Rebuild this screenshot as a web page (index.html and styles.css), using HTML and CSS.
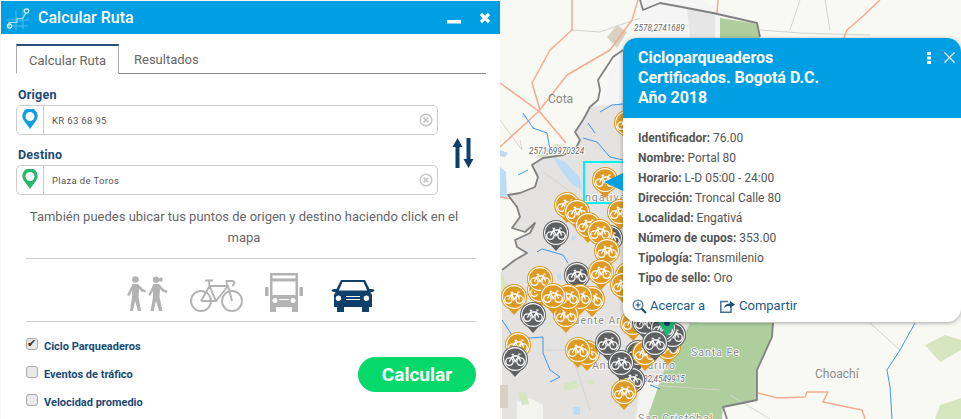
FILE: index.html
```html
<!DOCTYPE html>
<html lang="es">
<head>
    <meta charset="UTF-8">
    <meta name="viewport" content="width=device-width, initial-scale=1.0">
    <title>Calcular Ruta</title>
    <link rel="stylesheet" href="styles.css">
</head>
<body>
<div class="map">
    <svg class="map-bg" width="961" height="419" viewBox="0 0 961 419">
        <defs>
            <g id="bike-w" fill="none" stroke="#fff" stroke-width="1.3">
                <circle cx="-5.6" cy="2.6" r="3.7"/>
                <circle cx="5.6" cy="2.6" r="3.7"/>
                <path d="M-5.6 2.6L-2.4-3H3.6L5.6 2.6M-2.4-3L0 2.6L3.6-3M-3.4-4.6H-.8M3.2-4.8H5.6"/>
            </g>
            <g id="pin-o">
                <path d="M-12.6 4L0 18L12.6 4Z" fill="#de9a22"/>
                <circle r="13" fill="#de9a22"/>
                <circle r="11.4" fill="#de9a22" stroke="#fff" stroke-width="1.1"/>
                <use href="#bike-w"/>
            </g>
            <g id="pin-g">
                <path d="M-12.6 4L0 18L12.6 4Z" fill="#5f6062"/>
                <circle r="13" fill="#5f6062"/>
                <circle r="11.4" fill="#5f6062" stroke="#fff" stroke-width="1.1"/>
                <use href="#bike-w"/>
            </g>
        </defs>

        <!-- zonas -->
        <rect width="961" height="419" fill="#f9f9f4"/>
        <path class="zone-light" d="M640 0H700L760 25L760 100L775 323L690 340L600 110L613 57L640 40Z"/>
        <path class="zone-gray" d="M687 8L715 14V38H690Z"/>
        <path class="zone-urban" d="M590 107L650 100L700 320L680 345L673 350L663 373L657 390L647 419H502V270L515 260L527 253L517 247L515 240L530 233L535 223L525 232L512 228L520 217L517 207L508 195L520 193L535 187L538 177L532 165L543 158L563 155L575 150L580 140L575 132L583 120Z"/>
        <path class="zone-white" d="M517 402L530 398L543 405V419H517ZM640 385L660 380L655 400L645 419H636Z"/>
        <path class="zone-green" d="M690 323H773L772 337L757 370L757 400L723 407L722 419H647L657 390L663 373L673 350L680 343Z"/>
        <path class="zone-green" d="M720 18L758 24L760 40H720Z"/>
        <path class="zone-tan" d="M607 37L617 25L627 32L617 48Z"/>
        <path class="zone-tan" d="M500 385H508V408H500Z"/>
        <path class="zone-soft" d="M563 384L577 380L577 388L565 391ZM518 393L526 392L529 404L522 405ZM587 381L593 380L594 384L588 384ZM925 345L945 335L961 340V350L940 362ZM940 405L961 398V419H935Z"/>
        <path class="zone-soft" d="M535 157L543 153L556 144L563 145L553 154L543 158Z"/>
        <path class="zone-soft" d="M501 270L506 285L506 297H501Z"/>
        <path class="zone-lake" d="M553 157L565 162L580 178L582 190L572 184L562 172ZM500 167L506 172L507 198H500ZM500 150L508 153L505 157L500 156ZM541 153L548 148L552 150L546 156ZM556 275L561 273L561 281ZM570 239L577 234L574 241ZM573 407H580V415H574ZM523 112L526 118L522 117Z"/>

        <!-- vias y rios -->
        <g class="road-thin">
            <path d="M572 30L600 32L640 18M500 120L522 150L520 140M760 30L800 33L870 35M800 0L790 30M825 0L830 30"/>
            <path d="M870 323L900 350M545 350L568 350L577 370L590 410M568 350L640 345M730 395L770 419M650 385L720 390"/>
            <path d="M543 172L575 195"/>
        </g>
        <g class="road">
            <path d="M572 0V30L550 50L532 83L540 110"/>
            <path d="M638 0L632 20L610 50L567 75L538 112L500 147"/>
            <path d="M500 83L540 112L566 143"/>
            <path d="M718 0L717 13"/>
            <path d="M880 0L862 17L847 30L843 40"/>
            <path d="M758 393L777 398L805 397L807 392L828 392L823 402L847 407L862 410L865 419"/>
            <path d="M500 197L512 199"/>
        </g>
        <g class="river">
            <path d="M583 138L597 142L610 157L623 160M600 112L612 105L623 104M588 123L595 133"/>
            <path d="M523 113L533 128L547 133L550 150"/>
            <path d="M537 252L542 249L553 252L563 255L568 263"/>
            <path d="M502 320L512 335L530 338L543 337L543 353L550 370L560 377L550 382"/>
            <path d="M915 323L900 350L887 370L890 387L892 419"/>
            <path d="M518 175L528 170"/>
            <path d="M650 385L660 389"/>
        </g>

        <!-- limite de la ciudad -->
        <path class="border" d="M640 0L643 10L660 3L687 8L713 13L757 23L760 37"/>
        <path class="border" d="M623 50L613 57L598 80L600 90L598 100L590 107L583 120L575 132L580 140L575 150L563 155L543 158L532 165L538 177L535 187L520 193L508 195L517 207L520 217L512 228L525 232L535 223L530 233L515 240L517 247L527 253L515 260L502 270"/>
        <path class="border" d="M773 323L772 337L757 370L757 400L723 407L727 419"/>

        <!-- nombres -->
        <text class="place" x="548" y="103">Cota</text>
        <text class="place" x="815" y="378">Choachí</text>
        <text class="place halo" x="691" y="356">Santa Fe</text>
        <text class="place halo" x="638" y="422">San Cristóbal</text>
        <text class="place halo" x="566" y="324">Puente Aranda</text>
        <text class="place halo" x="592" y="369">Antonio Nariño</text>
        <text class="coord" x="634" y="31">2578,2741689</text>
        <text class="coord" x="529" y="154">2571,69970324</text>
        <text class="coord" x="643" y="382">82,4549915</text>

        <!-- seleccion -->
        <text class="place halo" x="585" y="201">ngativá</text>
        <rect x="584" y="162" width="40" height="41" fill="none" stroke="#00f2f7" stroke-width="2"/>

        <!-- cicloparqueaderos -->
        <use href="#pin-o" x="627" y="123"/>
        <use href="#pin-o" x="605" y="180"/>
        <use href="#pin-o" x="567" y="205"/>
        <use href="#pin-o" x="577" y="212"/>
        <use href="#pin-o" x="620" y="212"/>
        <use href="#pin-g" x="556" y="233"/>
        <use href="#pin-o" x="588" y="225"/>
        <use href="#pin-g" x="610" y="238"/>
        <use href="#pin-o" x="600" y="232"/>
        <use href="#pin-o" x="607" y="251"/>
        <use href="#pin-o" x="628" y="275"/>
        <use href="#pin-o" x="623" y="285"/>
        <use href="#pin-g" x="577" y="275"/>
        <use href="#pin-o" x="601" y="272"/>
        <use href="#pin-o" x="540" y="290"/>
        <use href="#pin-o" x="540" y="279"/>
        <use href="#pin-o" x="514" y="297"/>
        <use href="#pin-o" x="592" y="299"/>
        <use href="#pin-o" x="580" y="297"/>
        <use href="#pin-o" x="566" y="315"/>
        <use href="#pin-o" x="568" y="297"/>
        <use href="#pin-o" x="553" y="296"/>
        <use href="#pin-g" x="533" y="315"/>
        <use href="#pin-o" x="518" y="345"/>
        <use href="#pin-g" x="515" y="359"/>
        <use href="#pin-o" x="587" y="353"/>
        <use href="#pin-o" x="578" y="350"/>
        <use href="#pin-g" x="608" y="343"/>
        <use href="#pin-o" x="633" y="323"/>
        <use href="#pin-g" x="645" y="322"/>
        <use href="#pin-o" x="668" y="347"/>
        <use href="#pin-g" x="638" y="353"/>
        <use href="#pin-o" x="645" y="353"/>
        <use href="#pin-g" x="632" y="380"/>
        <use href="#pin-g" x="621" y="363"/>
        <use href="#pin-g" x="673" y="335"/>
        <use href="#pin-g" x="663" y="328"/>
        <use href="#pin-g" x="655" y="343"/>
        <use href="#pin-o" x="624" y="392"/>
        <path d="M658 322H676L667 337Z" fill="#22b573"/>
        <circle cx="667" cy="323" r="3" fill="#123f6d"/>
    </svg>

    <section class="panel">
        <header class="panel-head">
            <svg class="logo" width="24" height="24" viewBox="0 0 24 24" fill="none">
                <path d="M1 14H23M1 20H22M10 4V24M17 3V23" stroke="#4fbcec" stroke-width="1"/>
                <path d="M3 21V16.5H11V12.5H16.5L20 7" stroke="#a9e0f7" stroke-width="1.2"/>
                <circle cx="3.5" cy="20" r="2.2" stroke="#e4f6fd" stroke-width="1.2"/>
                <circle cx="20.5" cy="5" r="2.2" stroke="#e4f6fd" stroke-width="1.2"/>
            </svg>
            <h1>Calcular Ruta</h1>
            <div class="win-btns">
                <svg width="14" height="14" viewBox="0 0 14 14"><rect y="9" width="14" height="3.5" fill="#fff"/></svg>
                <svg width="12" height="12" viewBox="0 0 12 12"><path d="M2 2L10 10M10 2L2 10" stroke="#fff" stroke-width="3.2"/></svg>
            </div>
        </header>
        <div class="panel-body">
            <nav class="tabs">
                <a class="tab active">Calcular Ruta</a>
                <a class="tab">Resultados</a>
            </nav>

            <div class="route">
                <div class="fields">
                    <label class="field-label">Origen</label>
                    <div class="field">
                        <span class="field-icon">
                            <svg width="16" height="20" viewBox="0 0 16 20"><path fill-rule="evenodd" d="M8 20L1.8 11.5A7.7 7.7 0 1 1 14.2 11.5ZM8 3A4.5 4.5 0 1 0 8 12A4.5 4.5 0 0 0 8 3Z" fill="#0d9ee4"/></svg>
                        </span>
                        <span class="field-text">KR 63 68 95</span>
                        <svg class="clear" width="14" height="14" viewBox="0 0 14 14" fill="none"><circle cx="7" cy="7" r="5.8" stroke="#c8c8c8" stroke-width="1.5"/><path d="M4.6 4.6L9.4 9.4M9.4 4.6L4.6 9.4" stroke="#c8c8c8" stroke-width="1.8"/></svg>
                    </div>
                    <label class="field-label">Destino</label>
                    <div class="field">
                        <span class="field-icon">
                            <svg width="16" height="20" viewBox="0 0 16 20"><path fill-rule="evenodd" d="M8 20L1.8 11.5A7.7 7.7 0 1 1 14.2 11.5ZM8 3A4.5 4.5 0 1 0 8 12A4.5 4.5 0 0 0 8 3Z" fill="#25b86b"/></svg>
                        </span>
                        <span class="field-text">Plaza de Toros</span>
                        <svg class="clear" width="14" height="14" viewBox="0 0 14 14" fill="none"><circle cx="7" cy="7" r="5.8" stroke="#c8c8c8" stroke-width="1.5"/><path d="M4.6 4.6L9.4 9.4M9.4 4.6L4.6 9.4" stroke="#c8c8c8" stroke-width="1.8"/></svg>
                    </div>
                </div>
                <svg class="swap" width="22" height="30" viewBox="0 0 22 30"><path d="M5.5 30V8M16.5 0V22" stroke="#0f3f6b" stroke-width="4"/><path d="M0.5 9L5.5 0L10.5 9ZM11.5 21H21.5L16.5 30Z" fill="#0f3f6b"/></svg>
            </div>

            <p class="hint">También puedes ubicar tus puntos de origen y destino haciendo click en el mapa</p>

            <div class="modes">
                <svg class="mode" width="42" height="36" viewBox="0 0 42 36" fill="#b3b3b3">
                    <circle cx="9.5" cy="3.5" r="3.3"/>
                    <path d="M6.5 8H12L17 13L20 14.5L19.5 16.5L15.5 15.5L13 13L12.5 21L15 35H12L9 25L7 35H4L6 21V14.5L3.5 20L1 19Z"/>
                    <circle cx="30" cy="3.7" r="3.2"/>
                    <path d="M33 2.5C36 0 38 3 35.5 6L33 5Z"/>
                    <path d="M27.5 8H33L37.5 13L41.5 15L41 17L36.5 15.5L34 13L33.5 21L36.5 35H33L30 25L27.5 35H24.5L27 21L27 15L24 20L22.5 18.5Z"/>
                </svg>
                <svg class="mode" width="53" height="33" viewBox="0 0 53 33" fill="none" stroke="#b3b3b3" stroke-width="1.9">
                    <circle cx="11" cy="22" r="10"/>
                    <circle cx="42" cy="22" r="10"/>
                    <path d="M11 22L19.5 7H38L42 22M19.5 7L26 22H11M38 7L26 22M15 1.5H23M19 1.5L19.5 7M37 7L36.5 2H42C45 2 45 6 42 6.5"/>
                </svg>
                <svg class="mode" width="38" height="39" viewBox="0 0 38 39" fill="#b3b3b3">
                    <path fill-rule="evenodd" d="M5 0H33V39H27V34H11V39H5ZM7.5 2.5V5.5H30.5V2.5ZM7.5 8.5V22H30.5V8.5ZM10 25A2.5 2.5 0 1 0 10 30A2.5 2.5 0 0 0 10 25ZM28 25A2.5 2.5 0 1 0 28 30A2.5 2.5 0 0 0 28 25ZM14 26V27H24V26Z"/>
                    <rect y="14" width="3.5" height="9"/>
                    <rect x="34.5" y="14" width="3.5" height="9"/>
                </svg>
                <svg class="mode" width="44" height="32" viewBox="0 0 44 32" fill="#0f3f6b">
                    <path fill-rule="evenodd" d="M10 0H34L38.5 9H41C44 9 44 12 41 12H39.5L41 15V27H38V32H31V27H13V32H6V27H3V15L4.5 12H3C0 12 0 9 3 9H5.5ZM11.5 2L7.8 10.5H36.2L32.5 2ZM8 15.5A2.8 2.8 0 1 0 8 21A2.8 2.8 0 0 0 8 15.5ZM36 15.5A2.8 2.8 0 1 0 36 21A2.8 2.8 0 0 0 36 15.5ZM15 16V17H29V16ZM15 19V20H29V19Z"/>
                </svg>
            </div>

            <div class="options">
                <div class="checks">
                    <label class="check"><input type="checkbox" checked>Ciclo Parqueaderos</label>
                    <label class="check"><input type="checkbox">Eventos de tráfico</label>
                    <label class="check"><input type="checkbox">Velocidad promedio</label>
                </div>
                <button type="button" class="go">Calcular</button>
            </div>
        </div>
    </section>

    <section class="popup">
        <header class="popup-head">
            <h2>Cicloparqueaderos<br>Certificados. Bogotá D.C.<br>Año 2018</h2>
            <div class="popup-btns">
                <svg width="4" height="12" viewBox="0 0 4 12" fill="#fff"><rect width="4" height="3"/><rect y="4.5" width="4" height="3"/><rect y="9" width="4" height="3"/></svg>
                <svg width="11" height="11" viewBox="0 0 11 11"><path d="M.5.5L10.5 10.5M10.5.5L.5 10.5" stroke="#fff" stroke-width="1.1"/></svg>
            </div>
        </header>
        <div class="popup-body">
            <p><b>Identificador:</b> 76.00</p>
            <p><b>Nombre:</b> Portal 80</p>
            <p><b>Horario:</b> L-D 05:00 - 24:00</p>
            <p><b>Dirección:</b> Troncal Calle 80</p>
            <p><b>Localidad:</b> Engativá</p>
            <p><b>Número de cupos:</b> 353.00</p>
            <p><b>Tipología:</b> Transmilenio</p>
            <p><b>Tipo de sello:</b> Oro</p>
        </div>
        <footer class="popup-actions">
            <a class="action">
                <svg width="15" height="15" viewBox="0 0 15 15" fill="none"><circle cx="6" cy="6" r="4.8" stroke="#5c86a8" stroke-width="1.4"/><path d="M9.5 9.5L14 14" stroke="#1b4f7a" stroke-width="2.2"/><path d="M3.5 6H8.5M6 3.5V8.5" stroke="#1b4f7a" stroke-width="1.2"/></svg>
                Acercar a
            </a>
            <a class="action share">
                <svg width="15" height="14" viewBox="0 0 15 14" fill="none"><path d="M8 2.5H.8V13.2H11V8" stroke="#45709a" stroke-width="1.5"/><path d="M4 9C5 5.5 7.5 4.5 10 4.5V2L15 5.5L10 9V6.8C8 6.8 5.5 7.5 4 9Z" fill="#1b4f7a"/></svg>
                Compartir
            </a>
        </footer>
    </section>

    <svg class="popup-arrow" width="20" height="18" viewBox="0 0 20 18"><path d="M0 9L19 0V18Z" fill="#009fe3"/></svg>
</div>
</body>
</html>
```

FILE: styles.css
```css
* {
    box-sizing: border-box;
}

body {
    margin: 0;
    font-family: Roboto, "Liberation Sans", sans-serif;
    color: #555;
}

h1, h2, p {
    margin: 0;
}

.map {
    position: relative;
    width: 961px;
    height: 419px;
    overflow: hidden;
}

.map-bg {
    position: absolute;
    top: 0;
    left: 0;
}

/* capas del mapa */
.zone-light { fill: #f5f5f5; }
.zone-gray { fill: #e6e6e6; }
.zone-urban { fill: #e5e3e1; }
.zone-white { fill: #f3f3f1; }
.zone-green { fill: #aecf9d; }
.zone-tan { fill: #d9d2c2; }
.zone-soft { fill: #d6e6bf; }
.zone-lake { fill: #bcdcf7; }

.road, .road-thin, .river, .border {
    fill: none;
    stroke-linejoin: round;
}

.road { stroke: #f4ab92; stroke-width: 1.5; }
.road-thin { stroke: #d4d4cc; stroke-width: 1; }
.river { stroke: #3f97ec; stroke-width: 1; }
.border { stroke: #808183; stroke-width: 1.8; }

.place {
    font-size: 12px;
    fill: #8a8a8a;
}

.halo {
    font-size: 10.5px;
    letter-spacing: 1px;
    paint-order: stroke;
    stroke: #fff;
    stroke-width: 1.5px;
}

.coord {
    font-size: 8.2px;
    font-style: italic;
    fill: #666;
    paint-order: stroke;
    stroke: #fff;
    stroke-width: 1.5px;
}

/* panel de la ruta */
.panel {
    position: absolute;
    top: 1px;
    left: 1px;
    width: 499px;
    height: 418px;
    background: #fff;
}

.panel-head {
    display: flex;
    align-items: center;
    height: 33px;
    padding: 0 9px 0 5px;
    background: #009fe3;
    color: #fff;
}

.logo {
    margin-right: 8px;
}

.panel-head h1 {
    flex: 1;
    font-size: 16px;
    font-weight: 500;
}

.win-btns {
    display: flex;
    align-items: center;
    gap: 18px;
}

.panel-body {
    padding: 10px 14px 0 15px;
}

.tabs {
    display: flex;
    height: 30px;
    border-bottom: 1px solid #888;
}

.tab {
    height: 30px;
    padding: 7px 13px 0;
    font-size: 13px;
    color: #666;
    line-height: 18px;
    white-space: nowrap;
}

.tab.active {
    width: 103px;
    padding: 6px 12px 0;
    border: 1px solid #aaa;
    border-top: 2px solid #2a4f7f;
    border-bottom: 1px solid #fff;
}

.tab + .tab {
    padding-left: 15px;
}

.route {
    display: flex;
    align-items: center;
}

.fields {
    width: 422px;
}

.field-label {
    display: block;
    height: 31px;
    padding-top: 13px;
    padding-left: 2px;
    font-size: 12.5px;
    font-weight: 700;
    line-height: 15px;
    color: #1a4a73;
    letter-spacing: .2px;
}

.field-label + .field + .field-label {
    height: 30px;
    padding-top: 12px;
}

.field {
    display: flex;
    align-items: center;
    height: 30px;
    border: 1px solid #ccc;
    border-radius: 5px;
}

.field-icon {
    display: flex;
    justify-content: center;
    width: 27px;
    height: 100%;
    padding-top: 3px;
    border-right: 1px solid #ccc;
}

.field-text {
    flex: 1;
    padding-left: 8px;
    font-size: 9.5px;
    letter-spacing: .35px;
}

.clear {
    margin-right: 4px;
}

.swap {
    margin: 36px 0 0 14px;
}

.hint {
    margin: 11px 24px 0 10px;
    font-size: 13px;
    line-height: 21px;
    text-align: center;
    color: #666;
}

.modes {
    display: flex;
    align-items: flex-end;
    height: 64px;
    margin: 10px 10px 0;
    padding: 0 0 9px 100px;
    border-top: 1px solid #ccc;
    border-bottom: 1px solid #ccc;
}

.mode:nth-child(1) { margin-right: 22px; }
.mode:nth-child(2) { margin-right: 22px; }
.mode:nth-child(3) { margin-right: 28px; }

.options {
    display: flex;
    justify-content: space-between;
    margin: 14px 10px 0;
}

.checks {
    display: flex;
    flex-direction: column;
    gap: 8px;
}

.check {
    display: flex;
    align-items: center;
    height: 20px;
    font-size: 11px;
    font-weight: 700;
    color: #1a4a73;
}

.check input {
    appearance: none;
    position: relative;
    width: 12px;
    height: 12px;
    margin: 0 6px 4px 0;
    border: 1px solid #aaa;
    border-radius: 3px;
    background: #e9e9e9;
}

.check input:checked::after {
    content: "✔";
    position: absolute;
    top: -2px;
    left: 0;
    font: 11px/13px "DejaVu Sans", sans-serif;
    color: #333;
}

.go {
    width: 118px;
    height: 35px;
    margin-top: 21px;
    border: none;
    border-radius: 18px;
    background: #06d96a;
    color: #fff;
    font-family: inherit;
    font-size: 19px;
    font-weight: 700;
}

/* ventana de informacion */
.popup {
    position: absolute;
    top: 38px;
    left: 623px;
    width: 338px;
    height: 284px;
    border-radius: 14px;
    background: #fff;
    box-shadow: 0 1px 4px rgba(0, 0, 0, 0.35);
    overflow: hidden;
}

.popup-head {
    display: flex;
    justify-content: space-between;
    height: 80px;
    padding: 10px 6px 0 15px;
    background: #009fe3;
    color: #fff;
}

.popup-head h2 {
    font-size: 16px;
    font-weight: 700;
    line-height: 20px;
}

.popup-btns {
    display: flex;
    align-items: flex-start;
    gap: 13px;
    padding-top: 4px;
}

.popup-body {
    padding: 10px 15px 0;
    font-size: 12px;
    line-height: 20px;
}

.popup-body b {
    font-weight: 700;
}

.popup-actions {
    display: flex;
    gap: 15px;
    margin-top: 10px;
    padding-left: 9px;
}

.action {
    display: flex;
    align-items: center;
    gap: 3px;
    font-size: 13px;
    line-height: 16px;
    color: #1b5a86;
}

.share {
    gap: 4px;
}

.popup-arrow {
    position: absolute;
    top: 173px;
    left: 604px;
}
```
